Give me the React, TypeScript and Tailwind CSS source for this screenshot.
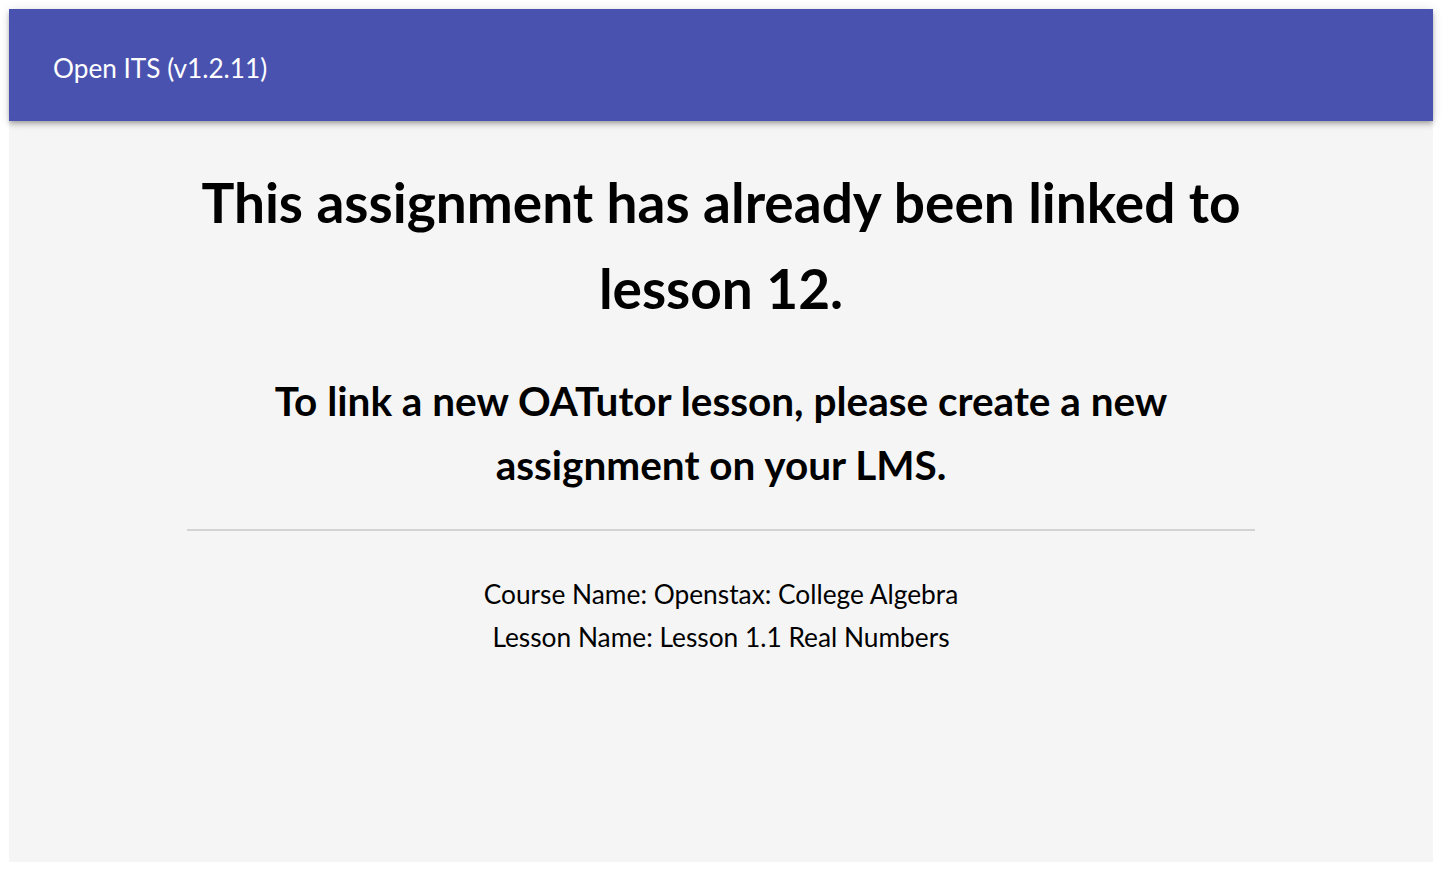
export default function App() {
  return (
    <div className="min-h-screen bg-white py-[9px] pl-[9px] pr-[10px] pb-[11px]" style={{ fontFamily: 'Lato, "Noto Sans", sans-serif' }}>
      <div className="flex h-[853px] flex-col bg-[#f5f5f5]">
        <header className="relative z-10 flex h-[112px] shrink-0 items-center bg-[#4a52b0] pl-[44px] pt-[7px] shadow-[0_2px_4px_-1px_rgba(0,0,0,0.2),0_4px_5px_0_rgba(0,0,0,0.14),0_1px_10px_0_rgba(0,0,0,0.12)]">
          <span className="text-[26.2px] text-white">Open ITS (v1.2.11)</span>
        </header>
        <main className="flex flex-col items-center pt-[38px] text-center text-black">
          <h1 className="w-[1080px] text-[55px] font-bold leading-[86px]">
            This assignment has already been linked to lesson 12.
          </h1>
          <h2 className="mt-[38px] w-[930px] text-[40.5px] font-bold leading-[64px]">
            To link a new OATutor lesson, please create a new assignment on your LMS.
          </h2>
          <hr className="mt-[32px] w-3/4 border-t-2 border-[#d3d3d3]" />
          <div className="mt-[42px] text-[26.3px] leading-[43px]">
            <p>Course Name: Openstax: College Algebra</p>
            <p>Lesson Name: Lesson 1.1 Real Numbers</p>
          </div>
        </main>
      </div>
    </div>
  );
}
